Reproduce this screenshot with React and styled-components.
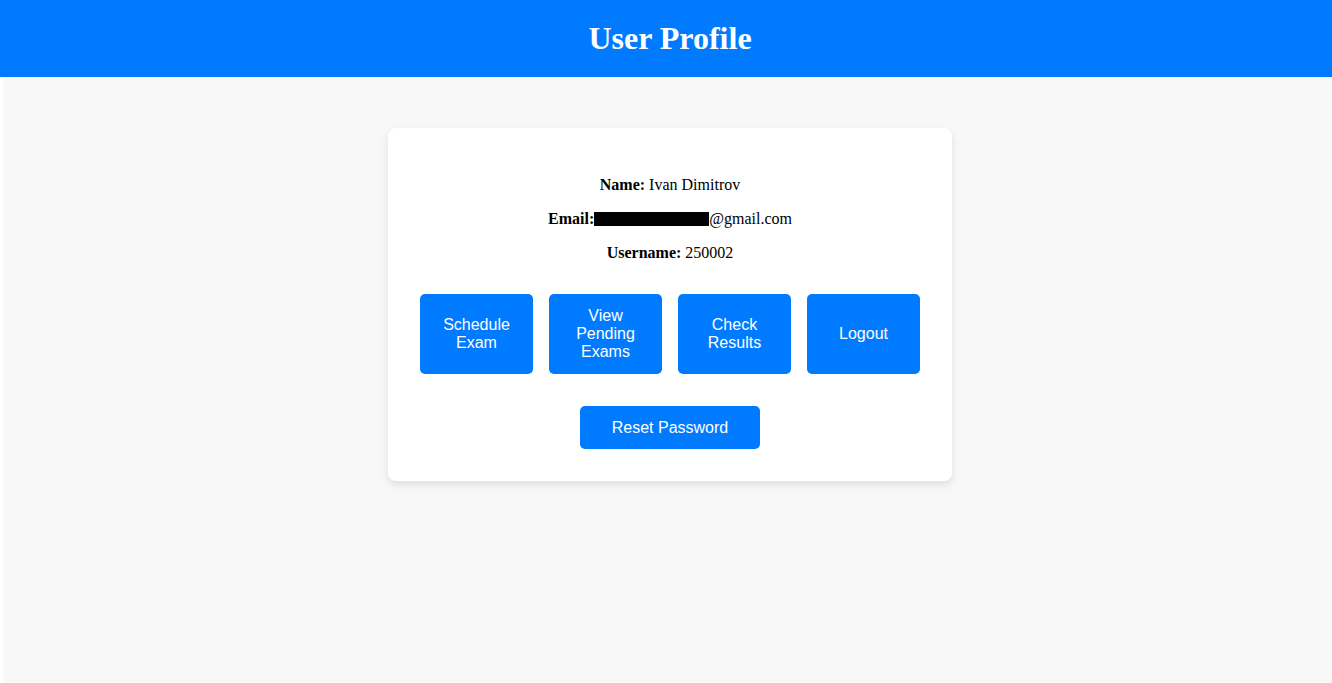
import React from "react";
import styled, { createGlobalStyle } from "styled-components";

const Global = createGlobalStyle`
  html, body { margin: 0; padding: 0; background: #ffffff; }
  body { font-family: "Liberation Serif", "Times New Roman", serif; }
  #root { min-height: 683px; display: flex; flex-direction: column; }
`;

const Header = styled.header`
  background: #007bff;
  color: #ffffff;
  padding: 20px 0 20px 8px;
  text-align: center;
`;

const Title = styled.h1`
  margin: 0;
  font-size: 32px;
  font-weight: bold;
  line-height: 37px;
`;

const Main = styled.main`
  flex: 1;
  margin-left: 3px;
  padding: 51px 0 0 5px;
  background: #f8f8f8;
  display: flex;
  flex-direction: column;
  align-items: center;
`;

const Card = styled.section`
  width: 500px;
  padding: 32px;
  background: #ffffff;
  border-radius: 8px;
  box-shadow: 0 4px 8px rgba(0, 0, 0, 0.1);
  text-align: center;
`;

const Info = styled.p`
  margin: 16px 0;
  font-size: 16px;
  line-height: 18px;
  color: #000;
`;

const Redacted = styled.span`
  display: inline-block;
  width: 115px;
  height: 14px;
  background: #000;
  vertical-align: -2px;
`;

const ButtonRow = styled.div`
  display: flex;
  gap: 16px;
  margin-top: 32px;
`;

const Button = styled.button`
  flex: ${(p) => (p.$wide ? "none" : "1")};
  min-height: ${(p) => (p.$wide ? "43px" : "80px")};
  padding: ${(p) => (p.$wide ? "12px 32px" : "10px 20px")};
  background: #007bff;
  color: #ffffff;
  border: none;
  border-radius: 5px;
  font-family: "Liberation Sans", Arial, sans-serif;
  font-size: 16px;
  line-height: 18px;
  white-space: ${(p) => (p.$wide ? "nowrap" : "normal")};
  cursor: pointer;
`;

const ResetRow = styled.div`
  display: flex;
  justify-content: center;
  margin-top: 32px;
`;

export default function App() {
  return (
    <>
      <Global />
      <Header>
        <Title>User Profile</Title>
      </Header>
      <Main>
        <Card>
          <Info>
            <strong>Name:</strong> Ivan Dimitrov
          </Info>
          <Info>
            <strong>Email:</strong>
            <Redacted />@gmail.com
          </Info>
          <Info>
            <strong>Username:</strong> 250002
          </Info>
          <ButtonRow>
            <Button>Schedule Exam</Button>
            <Button>View Pending Exams</Button>
            <Button>Check Results</Button>
            <Button>Logout</Button>
          </ButtonRow>
          <ResetRow>
            <Button $wide>Reset Password</Button>
          </ResetRow>
        </Card>
      </Main>
    </>
  );
}
